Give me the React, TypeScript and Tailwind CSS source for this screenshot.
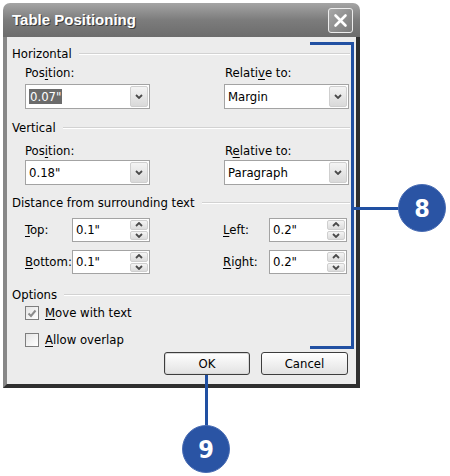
import React from 'react';

const Chevron = ({ up = false }: { up?: boolean }) => (
  <svg width="8" height="5" viewBox="0 0 8 5" className="block">
    <path d={up ? 'M1 4 L4 1 L7 4' : 'M1 1 L4 4 L7 1'} fill="none" stroke="#4a4a4a" strokeWidth="1.8" />
  </svg>
);

const GroupHeader = ({ label }: { label: string }) => (
  <div className="flex items-center h-4 gap-[7px] pl-[5px] pr-[6px]">
    <span className="leading-4 whitespace-nowrap">{label}</span>
    <div className="flex-1 h-[2px] border-t border-[#d2d2d2] border-b border-b-white" />
  </div>
);

const Combo = ({ children }: { children: React.ReactNode }) => (
  <div className="w-[125px] h-[25px] bg-white border border-[#a3a3a3] flex items-center justify-between pl-[3px] pr-[1px]">
    <div className="leading-4">{children}</div>
    <div className="w-[18px] h-[21px] rounded-[2px] border border-[#cfcfcf] bg-gradient-to-b from-[#f4f4f4] to-[#d9d9d9] flex items-center justify-center">
      <Chevron />
    </div>
  </div>
);

const Spinner = ({ value }: { value: string }) => (
  <div className="w-[78px] h-[24px] bg-white border border-[#a3a3a3] flex items-center justify-between pl-[3px] pr-[1px]">
    <div className="leading-4">{value}</div>
    <div className="w-[18px] h-[20px] flex flex-col gap-px">
      <div className="flex-1 rounded-[2px] border border-[#cfcfcf] bg-gradient-to-b from-[#f4f4f4] to-[#dcdcdc] flex items-center justify-center">
        <Chevron up />
      </div>
      <div className="flex-1 rounded-[2px] border border-[#cfcfcf] bg-gradient-to-b from-[#f4f4f4] to-[#dcdcdc] flex items-center justify-center">
        <Chevron />
      </div>
    </div>
  </div>
);

const Check = ({ checked, children }: { checked?: boolean; children: React.ReactNode }) => (
  <div className="flex items-center h-4 pl-[18px] gap-[6px]">
    <div className="w-[14px] h-[14px] border border-[#7e7e7e] bg-gradient-to-br from-[#e4e4e4] to-white flex items-center justify-center">
      {checked && (
        <svg width="10" height="9" viewBox="0 0 10 9">
          <path d="M1.5 4.5 L4 7 L8.5 1.5" fill="none" stroke="#8c8c8c" strokeWidth="2" />
        </svg>
      )}
    </div>
    <span className="leading-4">{children}</span>
  </div>
);

const U = ({ children }: { children: React.ReactNode }) => (
  <span className="underline underline-offset-2">{children}</span>
);

export default function App() {
  return (
    <div className="relative w-[450px] h-[476px] bg-white overflow-hidden text-[13px] text-black font-['DejaVu_Sans_Condensed','DejaVu_Sans',sans-serif]">
      <div className="ml-[3px] pt-[3px] w-[357px]">
        {/* title bar */}
        <div className="h-[34px] rounded-t-[7px] bg-gradient-to-b from-[#a5a5a5] via-[#7c7c7c] to-[#6c6c6c] flex items-center justify-between pl-[9px] pr-[7px]">
          <span className="text-white font-bold text-[15px] leading-5 font-['Liberation_Sans',sans-serif] [text-shadow:1px_1px_0_#3a3a3a]">
            Table Positioning
          </span>
          <div className="w-[25px] h-[25px] rounded-[3px] border border-[#ededed] bg-gradient-to-br from-[#a8a8a8] to-[#7a7a7a] flex items-center justify-center">
            <svg width="15" height="15" viewBox="0 0 15 15">
              <path d="M2.5 2.5 L12.5 12.5 M12.5 2.5 L2.5 12.5" stroke="white" strokeWidth="2.6" strokeLinecap="round" />
            </svg>
          </div>
        </div>

        {/* body */}
        <div className="h-[351px] bg-[#ececec] border-l-4 border-l-[#878787] border-r-4 border-r-[#2f2f2f] border-b-4 border-b-[#2f2f2f] pt-[9px]">
          <GroupHeader label="Horizontal" />
          <div className="flex mt-[3px] pl-[18px] gap-[74px]">
            <div className="w-[125px]">
              <div className="leading-4">Pos<U>i</U>tion:</div>
              <div className="mt-[3px]">
                <Combo>
                  <span className="bg-[#6b6b6b] text-white px-px">0.07"</span>
                </Combo>
              </div>
            </div>
            <div className="w-[125px]">
              <div className="leading-4 pl-px">Relati<U>v</U>e to:</div>
              <div className="mt-[3px]">
                <Combo>Margin</Combo>
              </div>
            </div>
          </div>

          <div className="mt-[11px]">
            <GroupHeader label="Vertical" />
          </div>
          <div className="flex mt-[7px] pl-[18px] gap-[74px]">
            <div className="w-[125px]">
              <div className="leading-4">Pos<U>i</U>tion:</div>
              <div className="mt-px">
                <Combo>0.18"</Combo>
              </div>
            </div>
            <div className="w-[125px]">
              <div className="leading-4 pl-px">R<U>e</U>lative to:</div>
              <div className="mt-px">
                <Combo>Paragraph</Combo>
              </div>
            </div>
          </div>

          <div className="mt-[10px]">
            <GroupHeader label="Distance from surrounding text" />
          </div>
          <div className="mt-[7px] flex flex-col gap-[8px] pl-[18px]">
            <div className="flex items-center">
              <div className="w-[47px] leading-4"><U>T</U>op:</div>
              <Spinner value={'0.1"'} />
              <div className="w-[46px] ml-[73px] leading-4"><U>L</U>eft:</div>
              <Spinner value={'0.2"'} />
            </div>
            <div className="flex items-center">
              <div className="w-[47px] leading-4"><U>B</U>ottom:</div>
              <Spinner value={'0.1"'} />
              <div className="w-[46px] ml-[73px] leading-4"><U>R</U>ight:</div>
              <Spinner value={'0.2"'} />
            </div>
          </div>

          <div className="mt-[13px]">
            <GroupHeader label="Options" />
          </div>
          <div className="mt-[2px]">
            <Check checked><U>M</U>ove with text</Check>
          </div>
          <div className="mt-[11px]">
            <Check><U>A</U>llow overlap</Check>
          </div>

          <div className="mt-[4px] flex justify-end gap-[11px] pr-[8px]">
            <button className="w-[86px] h-[23px] rounded-[3px] border border-[#3d3d3d] bg-gradient-to-b from-white to-[#e2e2e2] shadow-[inset_0_0_0_1px_#d8d8d8] leading-4">
              OK
            </button>
            <button className="w-[87px] h-[23px] rounded-[3px] border border-[#3d3d3d] bg-gradient-to-b from-white to-[#e2e2e2] leading-4">
              Cancel
            </button>
          </div>
        </div>
      </div>

      {/* callout 8 */}
      <div className="absolute left-[310px] top-[42px] w-[44px] h-[3px] bg-[#2150a2]" />
      <div className="absolute left-[351px] top-[42px] w-[3px] h-[307px] bg-[#2150a2]" />
      <div className="absolute left-[310px] top-[346px] w-[44px] h-[3px] bg-[#2150a2]" />
      <div className="absolute left-[354px] top-[207px] w-[46px] h-[3px] bg-[#2150a2]" />
      <div className="absolute left-[398px] top-[184px] w-[48px] h-[48px] rounded-full bg-[#2a54a4] border border-[#4a6db4] flex items-center justify-center text-white font-bold text-[25px] leading-none font-['DejaVu_Sans_Condensed','DejaVu_Sans',sans-serif]">
        8
      </div>

      {/* callout 9 */}
      <div className="absolute left-[205px] top-[375px] w-[3px] h-[52px] bg-[#2150a2]" />
      <div className="absolute left-[182px] top-[425px] w-[48px] h-[48px] rounded-full bg-[#2a54a4] border border-[#4a6db4] flex items-center justify-center text-white font-bold text-[25px] leading-none font-['DejaVu_Sans_Condensed','DejaVu_Sans',sans-serif]">
        9
      </div>
    </div>
  );
}
